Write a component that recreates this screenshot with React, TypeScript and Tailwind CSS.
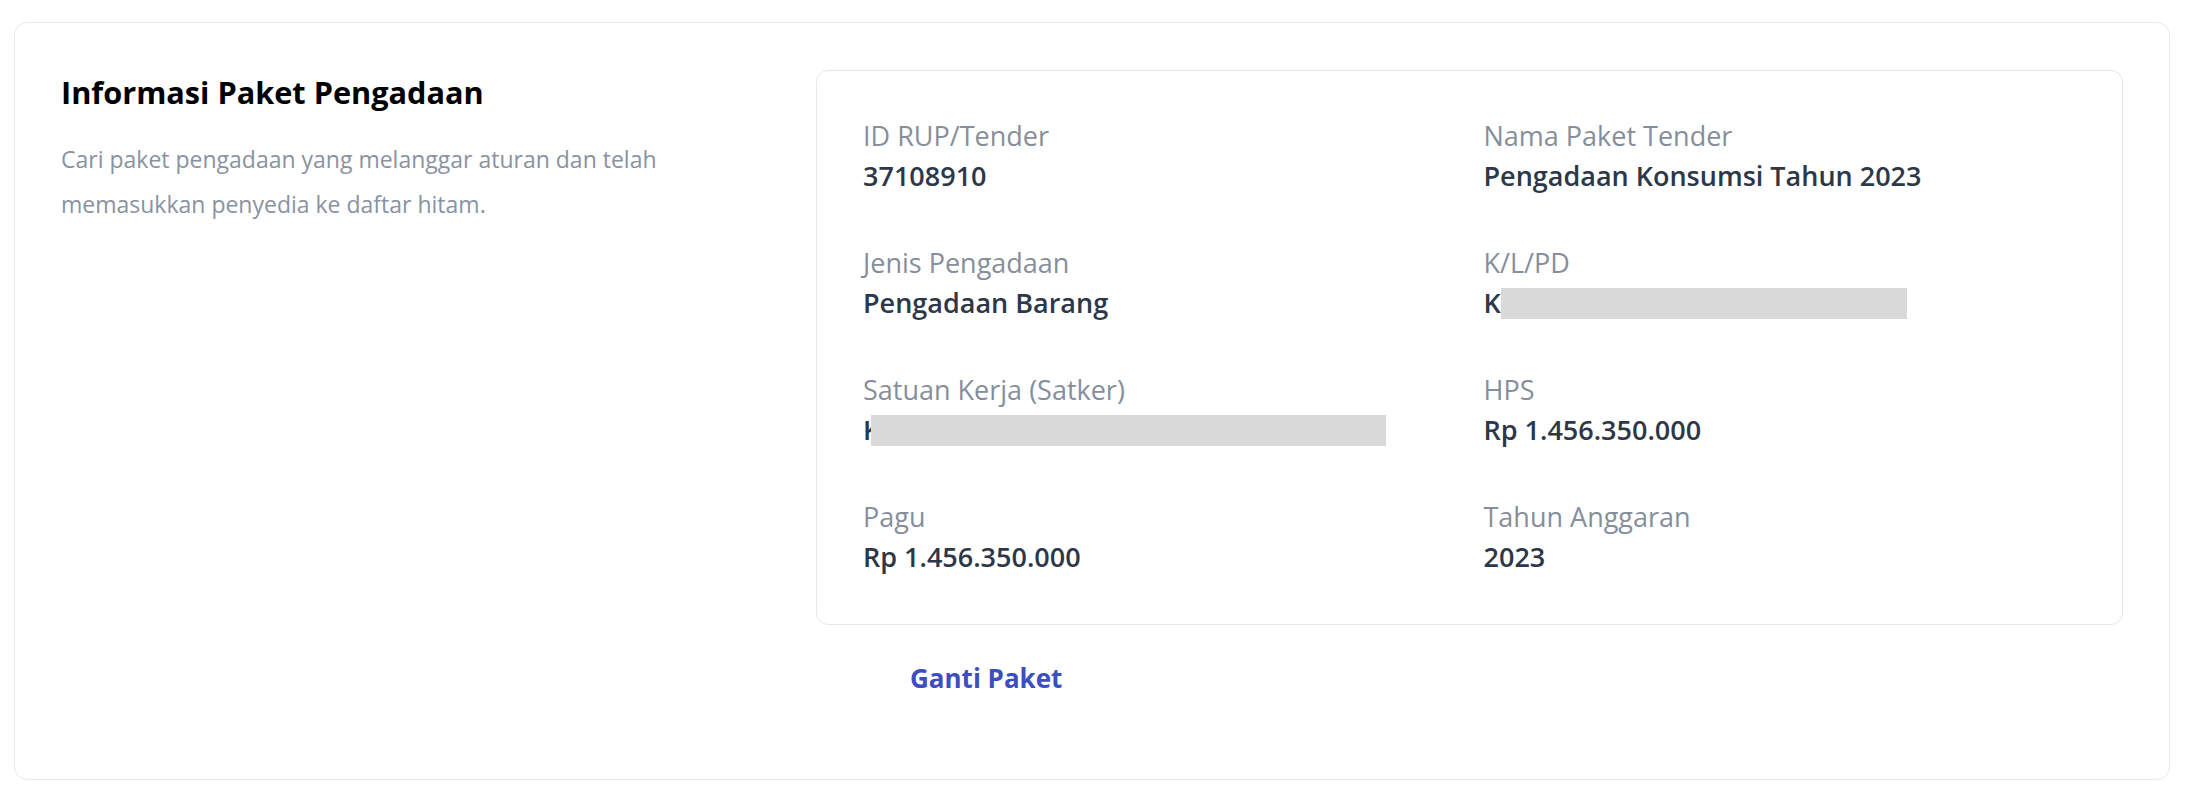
import React from "react";

type Field = {
  label: string;
  value?: string;
  redacted?: "short" | "long";
};

const fields: Field[] = [
  { label: "ID RUP/Tender", value: "37108910" },
  { label: "Nama Paket Tender", value: "Pengadaan Konsumsi Tahun 2023" },
  { label: "Jenis Pengadaan", value: "Pengadaan Barang" },
  { label: "K/L/PD", redacted: "short" },
  { label: "Satuan Kerja (Satker)", redacted: "long" },
  { label: "HPS", value: "Rp 1.456.350.000" },
  { label: "Pagu", value: "Rp 1.456.350.000" },
  { label: "Tahun Anggaran", value: "2023" },
];

function FieldItem({ field }: { field: Field }) {
  return (
    <div className="flex flex-col">
      <span className="text-[27px] leading-[40px] text-[#868e9c]">{field.label}</span>
      {field.redacted ? (
        <div className="flex h-[40px] items-center text-[27px] font-semibold text-[#2d3748]">
          <span className="leading-[40px]">K</span>
          {/* hidden value, grey block like the original */}
          {field.redacted === "long" ? (
            <span className="ml-[-9px] inline-block h-[31px] w-[515px] bg-[#d9d9d9]" />
          ) : (
            <span className="inline-block h-[31px] w-[406px] bg-[#d9d9d9]" />
          )}
        </div>
      ) : (
        <span className="text-[27px] font-semibold leading-[40px] text-[#2d3748]">{field.value}</span>
      )}
    </div>
  );
}

export default function App() {
  return (
    <main
      className="min-h-screen bg-white pl-[14px] pr-[20px] pt-[22px]"
      style={{ fontFamily: '"Open Sans", "Noto Sans", sans-serif' }}
    >
      <section className="flex rounded-[13px] border border-[#e8e9ed] bg-white px-[46px] pb-[47px] pt-[47px]">
        <div className="w-[755px] shrink-0">
          <h1 className="text-[30.7px] font-bold leading-[44px] text-black">Informasi Paket Pengadaan</h1>
          <p className="mt-[23px] max-w-[660px] text-[23px] leading-[45px] text-[#8a92a1]">
            Cari paket pengadaan yang melanggar aturan dan telah memasukkan penyedia ke daftar hitam.
          </p>
        </div>
        <div className="flex flex-1 flex-col">
          <div className="rounded-[12px] border border-[#e6e7eb] bg-white px-[46px] pb-[47px] pt-[45px]">
            <div className="grid grid-cols-2 gap-x-[28px] gap-y-[47px]">
              {fields.map((f, i) => (
                <FieldItem key={i} field={f} />
              ))}
            </div>
          </div>
          <div className="mb-[34px] mt-[33px]">
            <button className="ml-[94px] text-[26px] font-bold leading-[40px] text-[#3d4fbf]">Ganti Paket</button>
          </div>
        </div>
      </section>
    </main>
  );
}
